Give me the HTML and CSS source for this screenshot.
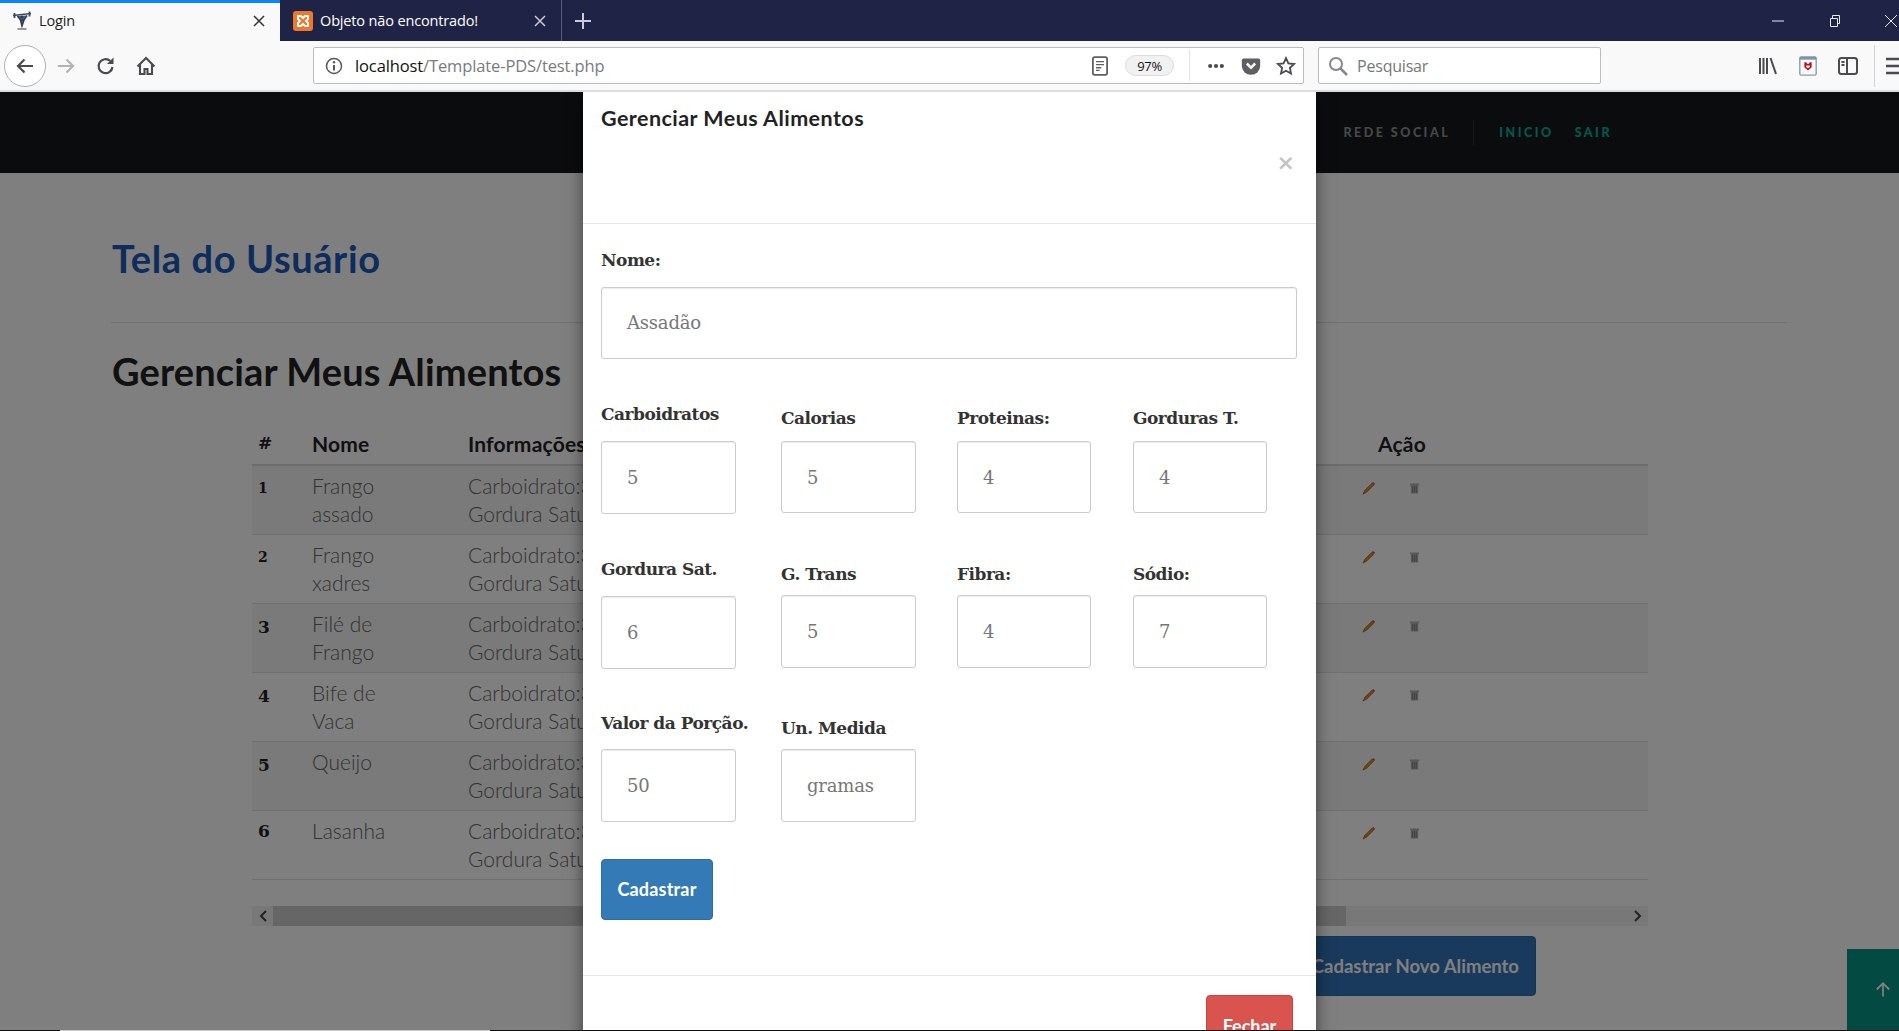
FILE: index.html
```html
<!DOCTYPE html>
<html lang="pt-BR">
<head>
<meta charset="utf-8">
<title>Login</title>
<link rel="stylesheet" href="styles.css">
</head>
<body>
<div class="app">
  <header class="browser">
    <div class="tabstrip">
      <div class="tab tab-active">
        <svg class="favicon" viewBox="0 0 20 20"><path d="M1 4.500L19 2.500" stroke="#3a4a66" stroke-width="1.400" fill="none"/><path d="M2.500 2v5M17.500 .5v5" stroke="#3a4a66" stroke-width="1.800" fill="none"/><path d="M5.500 5l3 4h3.500l3-4.500M8.500 9l1.500 6 2-6z" stroke="#2c3a55" stroke-width="1.500" fill="#56688a"/><circle cx="10" cy="6" r="1.600" fill="#2c3a55"/><path d="M5.500 18h9" stroke="#778" stroke-width="1.500"/></svg>
        <span class="tab-title">Login</span>
        <svg class="tab-close" viewBox="0 0 12 12"><path d="M1 1l10 10M11 1L1 11" stroke="#333" stroke-width="1.500"/></svg>
      </div>
      <div class="tab tab-other">
        <svg class="favicon" viewBox="0 0 20 20"><rect width="20" height="20" rx="3" fill="#f0762a"/><path d="M5 5h3l2 2 2-2h3v3l-2 2 2 2v3h-3l-2-2-2 2H5v-3l2-2-2-2z" fill="none" stroke="#fff" stroke-width="2"/></svg>
        <span class="tab-title">Objeto não encontrado!</span>
        <svg class="tab-close" viewBox="0 0 12 12"><path d="M1 1l10 10M11 1L1 11" stroke="#c9cbd6" stroke-width="1.500"/></svg>
      </div>
      <svg class="new-tab" viewBox="0 0 18 18"><path d="M9 1v16M1 9h16" stroke="#c9cbd6" stroke-width="2"/></svg>
      <div class="win-controls">
        <svg class="win-min" viewBox="0 0 12 12"><path d="M0 6h12" stroke="#e8e8f0" stroke-width="1"/></svg>
        <svg class="win-restore" viewBox="0 0 12 12"><path d="M1.500 3.500h7v8h-7zM3.500 3.500v-3h7v8h-2" fill="none" stroke="#e8e8f0" stroke-width="1"/></svg>
        <svg class="win-x" viewBox="0 0 14 14"><path d="M1 1l12 12M13 1L1 13" stroke="#e8e8f0" stroke-width="1"/></svg>
      </div>
    </div>
    <div class="toolbar">
      <div class="nav-buttons">
        <span class="back-btn"><svg class="icon-20" viewBox="0 0 20 20"><path d="M18 10H3M9.500 3.500L3 10l6.500 6.500" fill="none" stroke="#4a4a4f" stroke-width="2.200"/></svg></span>
        <span class="tool-btn"><svg class="icon-20" viewBox="0 0 20 20"><path d="M2 10h15M10.500 3.500L17 10l-6.500 6.500" fill="none" stroke="#b3b3b5" stroke-width="2.200"/></svg></span>
        <span class="tool-btn"><svg class="icon-20" viewBox="0 0 20 20"><path d="M16.500 11a7 7 0 1 1-2.200-6" fill="none" stroke="#4a4a4f" stroke-width="2.200"/><path d="M17.500 1.500v6.500H11z" fill="#4a4a4f"/></svg></span>
        <span class="tool-btn"><svg class="icon-20" viewBox="0 0 20 20"><path d="M1.500 10.500L10 2l8.500 8.500M4 8.500V18h4.500v-5h3v5H16V8.500" fill="none" stroke="#4a4a4f" stroke-width="2.100"/></svg></span>
      </div>
      <div class="address">
        <svg class="icon-18" viewBox="0 0 18 18"><circle cx="9" cy="9" r="7.500" fill="none" stroke="#58585c" stroke-width="1.500"/><path d="M9 8v5.500" stroke="#58585c" stroke-width="2"/><circle cx="9" cy="5.300" r="1.200" fill="#58585c"/></svg>
        <span class="url"><span class="url-host">localhost</span>/Template-PDS/test.php</span>
        <div class="address-tools">
          <svg class="reader" viewBox="0 0 18 22"><rect x="1" y="1" width="16" height="20" rx="2" fill="none" stroke="#5f5f63" stroke-width="2"/><path d="M4.500 6h9M4.500 9.500h9M4.500 13h6M4.500 16h4" stroke="#5f5f63" stroke-width="1.500"/></svg>
          <span class="zoom-pill">97%</span>
          <span class="vsep"></span>
          <svg class="addr-icon" viewBox="0 0 24 24"><circle cx="5" cy="12" r="2.500" fill="#4a4a4f"/><circle cx="12" cy="12" r="2.500" fill="#4a4a4f"/><circle cx="19" cy="12" r="2.500" fill="#4a4a4f"/></svg>
          <svg class="addr-icon" viewBox="0 0 24 24"><path d="M3 3h18a2 2 0 0 1 2 2v7a11 10.500 0 0 1-22 0V5a2 2 0 0 1 2-2z" fill="#5f5f63"/><path d="M7 9l5 5 5-5" fill="none" stroke="#f9f9fa" stroke-width="3"/></svg>
          <svg class="addr-icon" viewBox="0 0 24 24"><path d="M12 2.500l2.900 6.300 6.800.8-5 4.700 1.300 6.800-6-3.400-6 3.400 1.300-6.800-5-4.700 6.800-.8z" fill="none" stroke="#4a4a4f" stroke-width="2.200"/></svg>
        </div>
      </div>
      <div class="search">
        <svg class="icon-20" viewBox="0 0 20 20"><circle cx="8" cy="8" r="6" fill="none" stroke="#88888c" stroke-width="2"/><path d="M12.500 12.500L19 19" stroke="#88888c" stroke-width="2.500"/></svg>
        <span class="search-text">Pesquisar</span>
      </div>
      <div class="right-tools">
        <span class="right-btn"><svg class="icon-20" viewBox="0 0 20 20"><path d="M2 2v16M5.500 2v16M9 2v16M12.500 2l5.500 16" fill="none" stroke="#4a4a4f" stroke-width="2"/></svg></span>
        <span class="right-btn"><svg class="icon-20" viewBox="0 0 20 22"><rect x="1" y="1" width="18" height="20" rx="1.500" fill="#f9f9fa" stroke="#8a9aa8" stroke-width="1.500"/><path d="M1 2.500h18" stroke="#7a94a8" stroke-width="3"/><path d="M6 7h2l1 1.500h2l1-1.500h2v5.500l-4 3.500-4-3.500zM8 10.500v1.500l2 1.500 2-1.500v-1.500z" fill="#b3141c" fill-rule="evenodd"/></svg></span>
        <span class="right-btn"><svg class="icon-20" viewBox="0 0 20 20"><rect x="1" y="2" width="18" height="16" rx="2.500" fill="none" stroke="#4a4a4f" stroke-width="2"/><path d="M9 2v16M3.500 6h3M3.500 9h3" stroke="#4a4a4f" stroke-width="2"/></svg></span>
        <span class="vsep vsep-tall"></span>
        <svg class="hamburger" viewBox="0 0 20 20"><path d="M0 3h20M0 10h20M0 17h20" stroke="#4a4a4f" stroke-width="2.400"/></svg>
      </div>
    </div>
  </header>

  <main class="page">
    <nav class="site-nav">
      <a class="nav-link">PÁGINAS</a>
      <a class="nav-link">REDE SOCIAL</a>
      <span class="nav-divider"></span>
      <a class="nav-link nav-accent">INICIO</a>
      <a class="nav-link nav-accent">SAIR</a>
    </nav>
    <section class="content">
      <h2 class="page-title">Tela do Usuário</h2>
      <hr class="rule">
      <h3 class="section-title">Gerenciar Meus Alimentos</h3>
      <div class="table-wrap">
        <table class="food-table">
          <colgroup><col class="c-num"><col class="c-name"><col class="c-info"><col class="c-act"></colgroup>
          <thead>
            <tr><th class="num">#</th><th>Nome</th><th><span class="info-clip">Informações</span></th><th class="th-act">Ação</th></tr>
          </thead>
          <tbody>
            <tr class="odd"><td class="num num-low">1</td><td>Frango<br>assado</td><td><span class="info-clip">Carboidrato:30<br>Gordura Saturada</span></td><td class="actions"><svg class="pencil" viewBox="0 0 14 14"><path d="M1 13l2-4 8-8 2 2-8 8z" fill="#e08a1e" stroke="#7a4a10" stroke-width=".6"/><path d="M11 1l2 2 1-1-2-2z" fill="#e0305a"/></svg><svg class="trash" viewBox="0 0 12 12"><path d="M1 1h10v2H1zM2 3h8v9H2z" fill="#b0b0b0"/><path d="M4 4v7M6 4v7M8 4v7" stroke="#808080"/></svg></td></tr>
            <tr><td class="num num-low">2</td><td>Frango<br>xadres</td><td><span class="info-clip">Carboidrato:30<br>Gordura Saturada</span></td><td class="actions"><svg class="pencil" viewBox="0 0 14 14"><path d="M1 13l2-4 8-8 2 2-8 8z" fill="#e08a1e" stroke="#7a4a10" stroke-width=".6"/><path d="M11 1l2 2 1-1-2-2z" fill="#e0305a"/></svg><svg class="trash" viewBox="0 0 12 12"><path d="M1 1h10v2H1zM2 3h8v9H2z" fill="#b0b0b0"/><path d="M4 4v7M6 4v7M8 4v7" stroke="#808080"/></svg></td></tr>
            <tr class="odd"><td class="num num-desc">3</td><td>Filé de<br>Frango</td><td><span class="info-clip">Carboidrato:30<br>Gordura Saturada</span></td><td class="actions"><svg class="pencil" viewBox="0 0 14 14"><path d="M1 13l2-4 8-8 2 2-8 8z" fill="#e08a1e" stroke="#7a4a10" stroke-width=".6"/><path d="M11 1l2 2 1-1-2-2z" fill="#e0305a"/></svg><svg class="trash" viewBox="0 0 12 12"><path d="M1 1h10v2H1zM2 3h8v9H2z" fill="#b0b0b0"/><path d="M4 4v7M6 4v7M8 4v7" stroke="#808080"/></svg></td></tr>
            <tr><td class="num num-desc">4</td><td>Bife de<br>Vaca</td><td><span class="info-clip">Carboidrato:30<br>Gordura Saturada</span></td><td class="actions"><svg class="pencil" viewBox="0 0 14 14"><path d="M1 13l2-4 8-8 2 2-8 8z" fill="#e08a1e" stroke="#7a4a10" stroke-width=".6"/><path d="M11 1l2 2 1-1-2-2z" fill="#e0305a"/></svg><svg class="trash" viewBox="0 0 12 12"><path d="M1 1h10v2H1zM2 3h8v9H2z" fill="#b0b0b0"/><path d="M4 4v7M6 4v7M8 4v7" stroke="#808080"/></svg></td></tr>
            <tr class="odd"><td class="num num-desc">5</td><td>Queijo<br>&nbsp;</td><td><span class="info-clip">Carboidrato:30<br>Gordura Saturada</span></td><td class="actions"><svg class="pencil" viewBox="0 0 14 14"><path d="M1 13l2-4 8-8 2 2-8 8z" fill="#e08a1e" stroke="#7a4a10" stroke-width=".6"/><path d="M11 1l2 2 1-1-2-2z" fill="#e0305a"/></svg><svg class="trash" viewBox="0 0 12 12"><path d="M1 1h10v2H1zM2 3h8v9H2z" fill="#b0b0b0"/><path d="M4 4v7M6 4v7M8 4v7" stroke="#808080"/></svg></td></tr>
            <tr><td class="num">6</td><td>Lasanha<br>&nbsp;</td><td><span class="info-clip">Carboidrato:30<br>Gordura Saturada</span></td><td class="actions"><svg class="pencil" viewBox="0 0 14 14"><path d="M1 13l2-4 8-8 2 2-8 8z" fill="#e08a1e" stroke="#7a4a10" stroke-width=".6"/><path d="M11 1l2 2 1-1-2-2z" fill="#e0305a"/></svg><svg class="trash" viewBox="0 0 12 12"><path d="M1 1h10v2H1zM2 3h8v9H2z" fill="#b0b0b0"/><path d="M4 4v7M6 4v7M8 4v7" stroke="#808080"/></svg></td></tr>
          </tbody>
        </table>
        <div class="scrollbar">
          <span class="scroll-arrow"><svg class="chev" viewBox="0 0 8 12"><path d="M7 1L2 6l5 5" fill="none" stroke="#444" stroke-width="2"/></svg></span>
          <span class="scroll-thumb"></span>
          <span class="scroll-rest"></span>
          <span class="scroll-arrow"><svg class="chev" viewBox="0 0 8 12"><path d="M1 1l5 5-5 5" fill="none" stroke="#444" stroke-width="2"/></svg></span>
        </div>
      </div>
      <div class="add-row"><button class="btn btn-add">Cadastrar Novo Alimento</button></div>
    </section>
    <a class="back-top"><svg class="top-arrow" viewBox="0 0 18 18"><path d="M9 17V2M2 9l7-7 7 7" fill="none" stroke="#fff" stroke-width="2"/></svg></a>
    <div class="backdrop"></div>

    <div class="modal">
      <div class="modal-header">
        <h4 class="modal-title">Gerenciar Meus Alimentos</h4>
        <span class="modal-close">×</span>
      </div>
      <form class="modal-body">
        <label class="lbl lbl-name">Nome:</label>
        <div class="inp inp-name">Assadão</div>
        <div class="form-row">
          <div class="fld fld-1"><label class="lbl lbl-a">Carboidratos</label><div class="inp inp-a">5</div></div>
          <div class="fld fld-2"><label class="lbl lbl-b">Calorias</label><div class="inp inp-b">5</div></div>
          <div class="fld fld-3"><label class="lbl lbl-b">Proteinas:</label><div class="inp inp-b">4</div></div>
          <div class="fld fld-4"><label class="lbl lbl-b">Gorduras T.</label><div class="inp inp-b">4</div></div>
        </div>
        <div class="form-row">
          <div class="fld fld-1"><label class="lbl lbl-a">Gordura Sat.</label><div class="inp inp-a">6</div></div>
          <div class="fld fld-2"><label class="lbl lbl-c">G. Trans</label><div class="inp inp-a">5</div></div>
          <div class="fld fld-3"><label class="lbl lbl-c">Fibra:</label><div class="inp inp-a">4</div></div>
          <div class="fld fld-4"><label class="lbl lbl-c">Sódio:</label><div class="inp inp-a">7</div></div>
        </div>
        <div class="form-row form-row-last">
          <div class="fld fld-1"><label class="lbl lbl-d">Valor da Porção.</label><div class="inp inp-a">50</div></div>
          <div class="fld fld-2"><label class="lbl lbl-c">Un. Medida</label><div class="inp inp-a">gramas</div></div>
        </div>
        <button class="btn btn-primary" type="button">Cadastrar</button>
      </form>
      <div class="modal-footer"><button class="btn btn-danger" type="button">Fechar</button></div>
    </div>
  </main>
  <div class="screen-edge"><span class="edge-a"></span><span class="edge-b"></span><span class="edge-c"></span></div>
</div>
</body>
</html>
```
FILE: styles.css
```css
* { box-sizing: border-box; }
html, body { margin: 0; height: 100%; overflow: hidden; }
body { font-family: "Lato", sans-serif; background: #fff; }
.app { position: relative; width: 1899px; height: 1031px; display: flex; flex-direction: column; overflow: hidden; }

/* Browser chrome */
.browser { flex: none; height: 92px; font-family: "Open Sans", sans-serif; }
.tabstrip { height: 41px; background: #1f2345; display: flex; align-items: center; }
.tab { height: 41px; display: flex; align-items: center; }
.tab-active { width: 280px; background: #f9f9fa; border-top: 3px solid #0a84ff; padding: 0 15px 3px 12px; color: #222; }
.tab-other { width: 282px; padding: 0 15px 0 13px; color: #fff; border-right: 1px solid #55587a; }
.favicon { width: 20px; height: 20px; flex: none; }
.tab-title { font-size: 14.500px; margin-left: 7px; flex: 1; white-space: nowrap; letter-spacing: -.15px; }
.tab-close { width: 12px; height: 12px; flex: none; }
.new-tab { width: 18px; height: 18px; margin-left: 12px; }
.win-controls { margin-left: auto; display: flex; align-items: center; width: 127px; }
.win-min { width: 12px; height: 12px; }
.win-restore { width: 12px; height: 12px; margin-left: 45px; }
.win-x { width: 14px; height: 14px; margin-left: 43px; }
.toolbar { height: 51px; background: #f9f9fa; border-bottom: 2px solid #dcdcde; display: flex; align-items: center; overflow: hidden; }
.nav-buttons { width: 313px; flex: none; display: flex; align-items: center; padding-left: 4px; }
.back-btn { width: 42px; height: 42px; border: 1px solid #b1b1b3; border-radius: 50%; background: #fff; display: flex; align-items: center; justify-content: center; }
.tool-btn { width: 40px; display: flex; justify-content: center; }
.icon-20 { width: 20px; height: 20px; flex: none; }
.icon-18 { width: 18px; height: 18px; flex: none; }
.address { width: 991px; height: 37px; flex: none; background: #fff; border: 1px solid #bcbcbc; border-radius: 2px; display: flex; align-items: center; padding: 0 4px 0 11px; }
.url { margin-left: 12px; font-size: 16.500px; color: #7a7a80; white-space: nowrap; letter-spacing: -.12px; }
.url-host { color: #111; }
.address-tools { margin-left: auto; display: flex; align-items: center; }
.reader { width: 16px; height: 20px; margin-right: 17px; }
.zoom-pill { width: 49px; height: 21px; border: 1px solid #dcdcde; border-radius: 11px; background: #f1f1f2; font-size: 13px; display: flex; align-items: center; justify-content: center; color: #111; letter-spacing: -.3px; }
.vsep { width: 1px; height: 31px; background: #e2e2e4; margin: 0 15px; }
.addr-icon { width: 20px; height: 20px; margin-right: 15px; }
.addr-icon:last-child { margin-right: 3px; }
.vsep + .addr-icon { margin-left: 1px; }
.search { width: 283px; height: 37px; flex: none; margin-left: 14px; background: #fff; border: 1px solid #bcbcbc; border-radius: 2px; display: flex; align-items: center; padding-left: 9px; gap: 9px; }
.search-text { font-size: 16px; color: #777; letter-spacing: -.2px; }
.right-tools { flex: none; display: flex; align-items: center; margin-left: 147px; }
.right-btn { width: 40px; display: flex; justify-content: center; }
.vsep-tall { height: 42px; margin: 0 5px 0 6px; background: #d4d4d6; }
.hamburger { width: 20px; height: 20px; flex: none; margin-left: 6px; }

/* Page */
.page { position: relative; flex: 1; overflow: hidden; background: #fff; }
.site-nav { height: 81px; background: #16181c; display: flex; align-items: center; justify-content: flex-end; padding-right: 287px; font-weight: 900; font-size: 12.500px; letter-spacing: 2.500px; }
.nav-link { color: #909090; margin-left: 30px; white-space: nowrap; }
.nav-divider { width: 1px; height: 25px; background: #333; margin-left: 23px; margin-right: 0; }
.nav-accent { color: #00b29e; margin-left: 21px; }
.nav-divider + .nav-accent { margin-left: 25px; }
.content { padding: 63px 112px 0 112px; }
.page-title { margin: 0; font-size: 38px; line-height: 44px; font-weight: 700; color: #1c58b8; letter-spacing: .6px; }
.rule { border: 0; border-top: 1px solid #e0e0e0; height: 0; margin: 42px 0 26px -1px; }
.section-title { margin: 0; font-size: 38px; line-height: 44px; font-weight: 700; color: #222; letter-spacing: .15px; }
.table-wrap { margin: 31px 0 0 140px; width: 1396px; }
.food-table { width: 1396px; table-layout: fixed; border-collapse: collapse; font-size: 21px; font-weight: 300; color: #666; }
.c-num { width: 54px; }
.c-name { width: 156px; }
.c-info { width: 893px; }
.c-act { width: 293px; }
.food-table th { text-align: left; height: 41px; padding: 0 6px 2px 6px; font-weight: 700; font-size: 21px; color: #222; border-bottom: 2px solid #d8d8d8; letter-spacing: .2px; vertical-align: middle; }
.food-table td { padding: 6px; line-height: 28px; vertical-align: top; border-bottom: 1px solid #e0e0e0; white-space: nowrap; overflow: hidden; height: 69px; }
.info-clip { display: block; width: 116px; overflow: hidden; white-space: nowrap; }
.odd td { background: #f4f4f4; }
.food-table .num { font-family: "DejaVu Serif", serif; font-weight: 700; color: #222; font-size: 17px; }
.food-table .num-low { font-size: 14px; padding-top: 8px; }
.food-table .num-desc { padding-top: 9px; }
.food-table .th-act { padding-left: 23px; }
.food-table .actions { padding-top: 8px; }
.pencil { width: 13px; height: 13px; margin: 8px 0 0 1px; display: inline-block; vertical-align: top; }
.trash { width: 11px; height: 12px; margin: 8px 0 0 34px; display: inline-block; vertical-align: top; }
.scrollbar { margin-top: 26px; height: 20px; display: flex; background: #f1f1f1; }
.scroll-arrow { width: 21px; display: flex; align-items: center; justify-content: center; flex: none; }
.chev { width: 8px; height: 12px; }
.scroll-thumb { width: 1073px; background: #cdcdcd; flex: none; }
.scroll-rest { flex: 1; }
.add-row { display: flex; justify-content: flex-end; padding-right: 251px; margin-top: 10px; }
.btn { font-family: "Lato", sans-serif; font-weight: 700; color: #fff; border: 1px solid transparent; border-radius: 4px; cursor: pointer; }
.btn-add { height: 60px; padding: 0 16px; background: #3374b8; border-color: #2e6da4; font-size: 18.500px; }
.back-top { position: absolute; right: 0; bottom: 0; width: 52px; height: 82px; background: #049484; display: flex; align-items: center; justify-content: center; padding: 0 0 2px 20px; }
.top-arrow { width: 16px; height: 17px; }
.backdrop { position: absolute; inset: 0; background: rgba(0, 0, 0, .5); }

/* Modal */
.modal { position: absolute; top: 0; left: 583px; width: 733px; background: #fff; box-shadow: 0 5px 15px rgba(0, 0, 0, .5); }
.modal-header { height: 132px; border-bottom: 1px solid #e5e5e5; padding: 14px 18px 0 18px; display: flex; flex-direction: column; }
.modal-title { margin: 0; font-size: 21.500px; line-height: 24px; font-weight: 700; color: #222; letter-spacing: .45px; }
.modal-close { align-self: flex-end; margin-top: 21px; margin-right: 3px; font-family: "DejaVu Sans", sans-serif; font-size: 22px; line-height: 24px; font-weight: 700; color: #c4c4c4; }
.modal-body { padding: 24px 18px 0 18px; height: 751px; }
.lbl { display: block; font-family: "DejaVu Serif", serif; font-weight: 700; font-size: 17px; line-height: 24px; color: #333; white-space: nowrap; letter-spacing: -.5px; }
.lbl-name { margin-bottom: 15px; }
.inp { border: 1px solid #ccc; border-radius: 3px; background: #fff; box-shadow: inset 0 1px 1px rgba(0, 0, 0, .075); padding: 0 25px; display: flex; align-items: center; font-family: "DejaVu Serif", serif; font-size: 18px; color: #777; letter-spacing: -.2px; }
.inp-name { height: 72px; width: 696px; padding-bottom: 2px; }
.form-row { display: flex; align-items: flex-start; margin-top: 43px; }
.form-row-last { margin-top: 42px; }
.lbl-a { margin-bottom: 15px; }
.lbl-b { margin-top: 4px; margin-bottom: 11px; }
.lbl-c { margin-top: 5px; margin-bottom: 9px; }
.lbl-d { margin-bottom: 14px; }
.inp-a { height: 73px; }
.inp-b { height: 72px; }
.fld-1 { width: 180px; }
.fld-1 .inp { width: 135px; }
.fld-2 { width: 176px; }
.fld-2 .inp { width: 135px; }
.fld-3 { width: 176px; }
.fld-3 .inp { width: 134px; }
.fld-4 { width: 134px; }
.fld-4 .inp { width: 134px; }
.btn-primary { display: block; margin-top: 37px; width: 112px; height: 61px; background: #337ab7; border-color: #2e6da4; font-size: 18px; letter-spacing: .2px; padding: 0 0 2px 0; }
.modal-footer { border-top: 1px solid #e5e5e5; padding: 19px 23px 0 0; height: 140px; display: flex; justify-content: flex-end; align-items: flex-start; }
.btn-danger { width: 87px; height: 61px; background: #d9534f; border-color: #d43f3a; font-size: 18px; padding: 0; }

.screen-edge { position: absolute; left: 0; right: 0; bottom: 0; height: 1px; display: flex; }
.edge-a { width: 60px; background: #111; }
.edge-b { width: 430px; background: #c8c8c8; }
.edge-c { flex: 1; background: #111; }
```
